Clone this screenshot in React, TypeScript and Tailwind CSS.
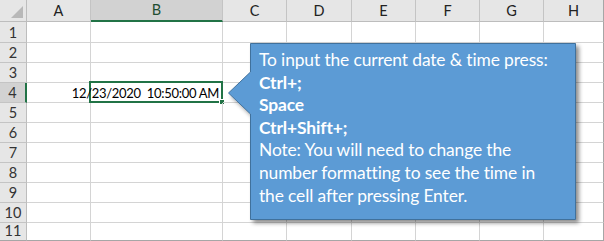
import React from "react";

const cols = ["A", "B", "C", "D", "E", "F", "G", "H"];
const rows = [1, 2, 3, 4, 5, 6, 7, 8, 9, 10, 11];

export default function App() {
  const font = { fontFamily: "Lato, 'Open Sans', sans-serif" };
  return (
    <div className="relative w-[604px] h-[241px] overflow-hidden bg-white" style={font}>
      <div className="grid grid-cols-[27px_64px_132px_64px_65px_64px_64px_64px_60px] grid-rows-[22px_21px_20px_20px_20px_20px_20px_20px_20px_20px_20px_18px]">
        {/* header row */}
        <div className="relative bg-[#e6e6e6] border-r border-b border-[#bdbdbd]">
          <svg className="absolute left-[11px] top-[6px]" width="12" height="12" viewBox="0 0 12 12">
            <polygon points="12,0 12,12 0,12" fill="#b8b8b8" />
          </svg>
        </div>
        {cols.map((c) => (
          <div
            key={c}
            className={
              c === "B"
                ? "flex items-center justify-center bg-[#d2d2d2] border-r border-r-[#c4c4c4] border-b-2 border-b-[#217346] text-[14.5px] text-[#1e4e30]"
                : c === "H"
                ? "flex items-center justify-center bg-[#e6e6e6] border-r border-r-[#a6a6a6] border-b border-b-[#bdbdbd] text-[14.5px] text-[#222]"
                : "flex items-center justify-center bg-[#e6e6e6] border-r border-r-[#c4c4c4] border-b border-b-[#bdbdbd] text-[14.5px] text-[#222]"
            }
          >
            {c}
          </div>
        ))}
        {rows.map((r) => (
          <React.Fragment key={r}>
            <div
              className={
                r === 4
                  ? "flex items-end justify-center bg-[#d2d2d2] border-r-2 border-r-[#217346] border-b border-b-[#c4c4c4] text-[14.5px] leading-[19px] text-[#333]"
                  : r === 11
                  ? "flex items-end justify-center bg-[#e6e6e6] border-r border-r-[#bdbdbd] border-b border-b-[#a6a6a6] text-[14.5px] leading-[19px] text-[#333]"
                  : "flex items-end justify-center bg-[#e6e6e6] border-r border-r-[#bdbdbd] border-b border-b-[#c4c4c4] text-[14.5px] leading-[19px] text-[#333]"
              }
            >
              {r}
            </div>
            {cols.map((c) => {
              const last = c === "H";
              const bottom = r === 11;
              const cls =
                "relative " +
                (last ? "border-r border-r-[#a6a6a6] " : "border-r border-r-[#d4d4d4] ") +
                (bottom ? "border-b border-b-[#a6a6a6]" : "border-b border-b-[#d4d4d4]");
              if (r === 4 && c === "A") {
                return <div key={c} className={"relative border-b border-b-[#d4d4d4]"} />;
              }
              if (r === 4 && c === "B") {
                return (
                  <div key={c} className={cls + " flex items-end justify-end pr-[3px]"}>
                    <div className="absolute left-[-2px] top-[-2px] right-[-1px] bottom-[-1px] border-2 border-[#217346]" />
                    <div className="absolute right-[-3px] bottom-[-3px] w-[6px] h-[6px] bg-[#217346] border border-white" />
                    <span className="relative whitespace-nowrap text-[13px] tracking-[-0.3px] leading-[18px] text-black">
                      12/23/2020&nbsp;&nbsp;10:50:00 AM
                    </span>
                  </div>
                );
              }
              return <div key={c} className={cls} />;
            })}
          </React.Fragment>
        ))}
      </div>

      {/* Callout */}
      <div className="absolute left-[226px] top-[41px] w-[360px] h-[190px]">
        <svg width="360" height="190" viewBox="0 0 360 190" className="absolute left-0 top-0">
          <defs>
            <filter id="sh" x="-10%" y="-10%" width="130%" height="130%">
              <feDropShadow dx="3" dy="3" stdDeviation="2.2" floodColor="#000" floodOpacity="0.45" />
            </filter>
          </defs>
          <polygon
            points="24.5,2.5 349.5,2.5 349.5,178.5 24.5,178.5 24.5,73 2.5,52 24.5,31"
            fill="#5b9bd5"
            stroke="#41719c"
            strokeWidth="1"
            filter="url(#sh)"
          />
        </svg>
        <div className="absolute left-[33px] top-[8px] text-white text-[17.4px] tracking-[-0.12px] leading-[22.6px] whitespace-nowrap">
          <div>To input the current date &amp; time press:</div>
          <div className="font-bold">Ctrl+;</div>
          <div className="font-bold">Space</div>
          <div className="font-bold">Ctrl+Shift+;</div>
          <div>Note: You will need to change the</div>
          <div>number formatting to see the time in</div>
          <div>the cell after pressing Enter.</div>
        </div>
      </div>
    </div>
  );
}
